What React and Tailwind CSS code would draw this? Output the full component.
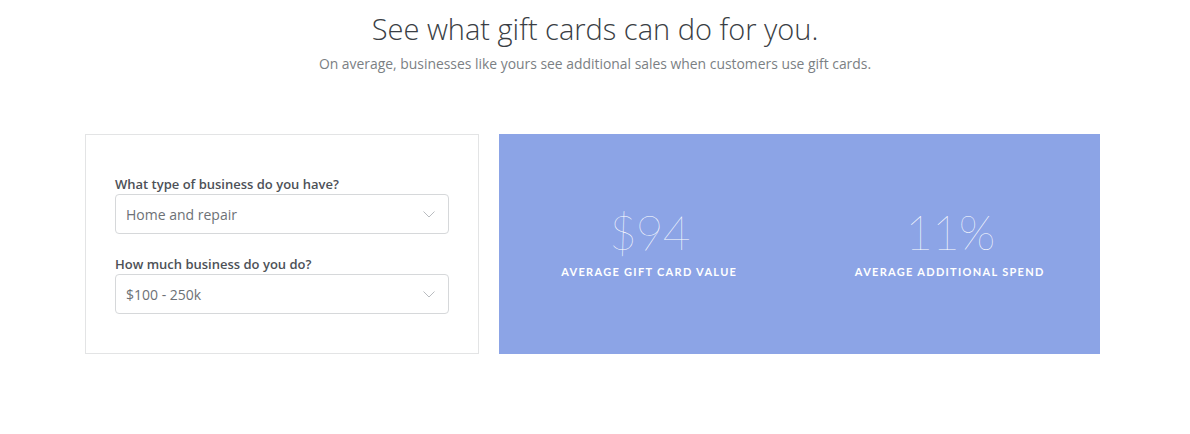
import React from "react";

const Chevron = () => (
  <svg width="12" height="7" viewBox="0 0 12 7" fill="none" className="shrink-0">
    <path d="M0.5 0.5L6 6L11.5 0.5" stroke="#b9bcc0" strokeWidth="1" />
  </svg>
);

const SelectBox = ({ label, value }) => (
  <div className="flex flex-col">
    <label className="text-[13px] font-semibold text-[#4d5157] leading-4 mb-[2px]">{label}</label>
    <div className="h-10 border border-[#d6d8da] rounded-[4px] flex items-center justify-between pl-[10px] pr-[13px]">
      <span className="text-[14px] text-[#6d7176]">{value}</span>
      <Chevron />
    </div>
  </div>
);

const Stat = ({ value, label }) => (
  <div className="flex flex-col items-center">
    <div className="text-[48px] leading-[48px] font-thin text-white tracking-[-1px]">{value}</div>
    <div className="mt-[8px] text-[11px] font-bold text-white tracking-[1.3px] uppercase">{label}</div>
  </div>
);

export default function App() {
  return (
    <div className="w-[1190px] h-[434px] bg-white font-['Open_Sans',sans-serif]">
      <div className="pt-[9px] text-center">
        <h1 className="text-[29px] leading-[40px] font-light text-[#3a3e44]">
          See what gift cards can do for you.
        </h1>
        <p className="mt-[5px] text-[13.9px] leading-5 text-[#7b7f84]">
          On average, businesses like yours see additional sales when customers use gift cards.
        </p>
      </div>

      <div className="mt-[60px] ml-[85px] w-[1015px] h-[220px] flex gap-[20px]">
        <div className="w-[394px] border border-[#e3e4e5] pt-[41px] px-[29px] flex flex-col gap-[22px]">
          <SelectBox label="What type of business do you have?" value="Home and repair" />
          <SelectBox label="How much business do you do?" value="$100 - 250k" />
        </div>
        <div className="flex-1 bg-[#8ca4e6] grid grid-cols-2 pt-[74px] font-['Lato',sans-serif]">
          <Stat value="$94" label="Average gift card value" />
          <Stat value="11%" label="Average additional spend" />
        </div>
      </div>
    </div>
  );
}
